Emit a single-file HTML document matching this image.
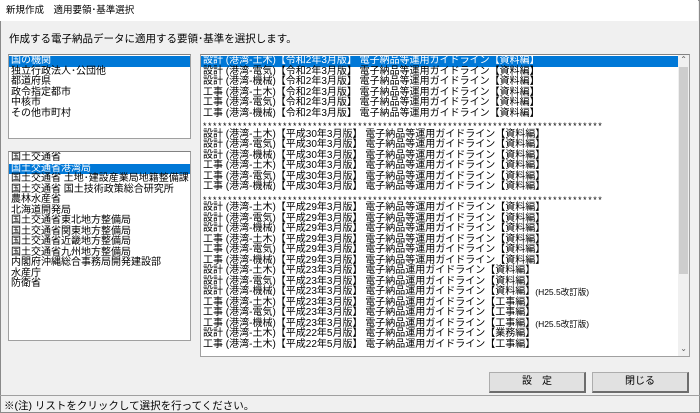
<!DOCTYPE html>
<html><head><meta charset="utf-8"><style>
*{margin:0;padding:0;box-sizing:border-box}
body{width:700px;height:413px;overflow:hidden;background:#f0f0f0;font-family:"Liberation Sans","Noto Sans CJK JP",sans-serif;font-size:10px;color:#000;position:relative}
.win{position:absolute;left:0;top:0;width:700px;height:413px;border:1px solid #8a8a8a}
.title{position:absolute;left:0;top:0;width:698px;height:21px;background:#fff;font-size:9.5px;line-height:21px;padding-left:6px}
.abs{position:absolute}
.list{position:absolute;background:#fff;border:1px solid #a0a0a0;border-top-color:#828282;overflow:hidden;white-space:nowrap}
.list div{height:10.5px;line-height:10.5px;padding-left:2px}
.list div span{line-height:10.5px;vertical-align:top}
.sel{background:#0078d7;color:#fff}
.sep{font-size:9px;letter-spacing:1.5px;padding-top:2px}
.btn{position:absolute;height:21px;background:#e1e1e1;border:1px solid #adadad;border-right:2px solid #6d6d6d;border-bottom:2px solid #6d6d6d;text-align:center;line-height:18px;font-size:10px}
</style></head><body>
<div class="win"></div>
<div class="title">新規作成　適用要領･基準選択</div>
<div class="abs" style="left:9px;top:31px;font-size:10.5px">作成する電子納品データに適用する要領･基準を選択します。</div>
<div class="list" style="left:8px;top:54px;width:183px;height:85px;padding-top:1px">
<div class="sel">国の機関</div><div>独立行政法人･公団他</div><div>都道府県</div><div>政令指定都市</div><div>中核市</div><div>その他市町村</div>
</div>
<div class="list" style="left:8px;top:151px;width:183px;height:190px;padding-top:1px">
<div>国土交通省</div><div class="sel">国土交通省港湾局</div><div>国土交通省 土地･建設産業局地籍整備課</div><div>国土交通省 国土技術政策総合研究所</div><div>農林水産省</div><div>北海道開発局</div><div>国土交通省東北地方整備局</div><div>国土交通省関東地方整備局</div><div>国土交通省近畿地方整備局</div><div>国土交通省九州地方整備局</div><div>内閣府沖縄総合事務局開発建設部</div><div>水産庁</div><div>防衛省</div>
</div>
<div class="list" style="left:200px;top:54px;width:490px;height:303px;padding-top:1px">
<div style="width:478px" class="sel">設計 (港湾-土木)【令和2年3月版】 電子納品等運用ガイドライン【資料編】</div>
<div>設計 (港湾-電気)【令和2年3月版】 電子納品等運用ガイドライン【資料編】</div>
<div>設計 (港湾-機械)【令和2年3月版】 電子納品等運用ガイドライン【資料編】</div>
<div>工事 (港湾-土木)【令和2年3月版】 電子納品等運用ガイドライン【資料編】</div>
<div>工事 (港湾-電気)【令和2年3月版】 電子納品等運用ガイドライン【資料編】</div>
<div>工事 (港湾-機械)【令和2年3月版】 電子納品等運用ガイドライン【資料編】</div>
<div class="sep">********************************************************************************</div>
<div>設計 (港湾-土木)【平成30年3月版】 電子納品等運用ガイドライン【資料編】</div>
<div>設計 (港湾-電気)【平成30年3月版】 電子納品等運用ガイドライン【資料編】</div>
<div>設計 (港湾-機械)【平成30年3月版】 電子納品等運用ガイドライン【資料編】</div>
<div>工事 (港湾-土木)【平成30年3月版】 電子納品等運用ガイドライン【資料編】</div>
<div>工事 (港湾-電気)【平成30年3月版】 電子納品等運用ガイドライン【資料編】</div>
<div>工事 (港湾-機械)【平成30年3月版】 電子納品等運用ガイドライン【資料編】</div>
<div class="sep">********************************************************************************</div>
<div>設計 (港湾-土木)【平成29年3月版】 電子納品等運用ガイドライン【資料編】</div>
<div>設計 (港湾-電気)【平成29年3月版】 電子納品等運用ガイドライン【資料編】</div>
<div>設計 (港湾-機械)【平成29年3月版】 電子納品等運用ガイドライン【資料編】</div>
<div>工事 (港湾-土木)【平成29年3月版】 電子納品等運用ガイドライン【資料編】</div>
<div>工事 (港湾-電気)【平成29年3月版】 電子納品等運用ガイドライン【資料編】</div>
<div>工事 (港湾-機械)【平成29年3月版】 電子納品等運用ガイドライン【資料編】</div>
<div>設計 (港湾-土木)【平成23年3月版】 電子納品運用ガイドライン【資料編】</div>
<div>設計 (港湾-電気)【平成23年3月版】 電子納品運用ガイドライン【資料編】</div>
<div>設計 (港湾-機械)【平成23年3月版】 電子納品運用ガイドライン【資料編】<span style="font-size:8.5px">(H25.5改訂版)</span></div>
<div>工事 (港湾-土木)【平成23年3月版】 電子納品運用ガイドライン【工事編】</div>
<div>工事 (港湾-電気)【平成23年3月版】 電子納品運用ガイドライン【工事編】</div>
<div>工事 (港湾-機械)【平成23年3月版】 電子納品運用ガイドライン【工事編】<span style="font-size:8.5px">(H25.5改訂版)</span></div>
<div>設計 (港湾-土木)【平成22年5月版】 電子納品運用ガイドライン【業務編】</div>
<div>工事 (港湾-土木)【平成22年5月版】 電子納品運用ガイドライン【工事編】</div>
<div class="abs" style="right:0;top:0;width:11px;height:301px;background:#f0f0f0"></div>
<div class="abs" style="right:1px;top:12px;width:9px;height:207px;background:#cdcdcd"></div>
<div class="abs" style="right:2px;top:0;font-size:8px;color:#606060">⌃</div>
<div class="abs" style="right:2px;bottom:2px;font-size:8px;color:#606060">⌄</div>
</div>
<div class="btn" style="left:489px;top:372px;width:97px">設　定</div>
<div class="btn" style="left:592px;top:372px;width:97px">閉じる</div>
<div class="abs" style="left:0;top:395px;width:700px;border-top:1px solid #a0a0a0"></div>
<div class="abs" style="left:4px;top:398px;font-size:10.5px">※(注) リストをクリックして選択を行ってください。</div>
</body></html>
